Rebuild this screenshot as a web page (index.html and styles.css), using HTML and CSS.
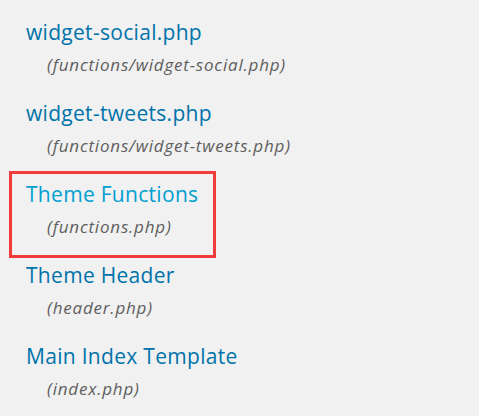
FILE: index.html
```html
<!DOCTYPE html>
<html lang="en">
<head>
    <meta charset="UTF-8">
    <title>Theme Files</title>
    <link rel="stylesheet" href="styles.css">
</head>
<body>
    <!-- Theme file list -->
    <ul class="theme-files">
        <li>
            <a href="#">widget-social.php</a>
            <span class="nonessential">(functions/widget-social.php)</span>
        </li>
        <li>
            <a href="#">widget-tweets.php</a>
            <span class="nonessential">(functions/widget-tweets.php)</span>
        </li>
        <li class="highlight">
            <a href="#" class="current">Theme Functions</a>
            <span class="nonessential">(functions.php)</span>
        </li>
        <li>
            <a href="#">Theme Header</a>
            <span class="nonessential">(header.php)</span>
        </li>
        <li>
            <a href="#">Main Index Template</a>
            <span class="nonessential">(index.php)</span>
        </li>
    </ul>
</body>
</html>
```

FILE: styles.css
```css
body {
    margin: 0;
    background-color: #f1f1f1;
    font-family: "Open Sans", "Noto Sans", sans-serif;
}
.theme-files {
    list-style: none;
    margin: 0;
    padding: 12px 0 0 12px;
    width: 201px;
}
.theme-files li {
    display: flex;
    flex-direction: column;
    height: 81px;
    box-sizing: border-box;
    padding: 6px 0 0 14px;
}
.theme-files li.highlight {
    outline: 3px solid #f23b3b;
}
.theme-files a {
    color: #0073aa;
    text-decoration: none;
    font-size: 21px;
    line-height: 28px;
    letter-spacing: 0.3px;
    white-space: nowrap;
}
.theme-files a.current {
    color: #00a0d2;
}
.nonessential {
    color: #5e5e5e;
    font-style: italic;
    font-size: 17px;
    line-height: 22px;
    letter-spacing: 0.8px;
    margin: 8px 0 0 21px;
    white-space: nowrap;
}
```
